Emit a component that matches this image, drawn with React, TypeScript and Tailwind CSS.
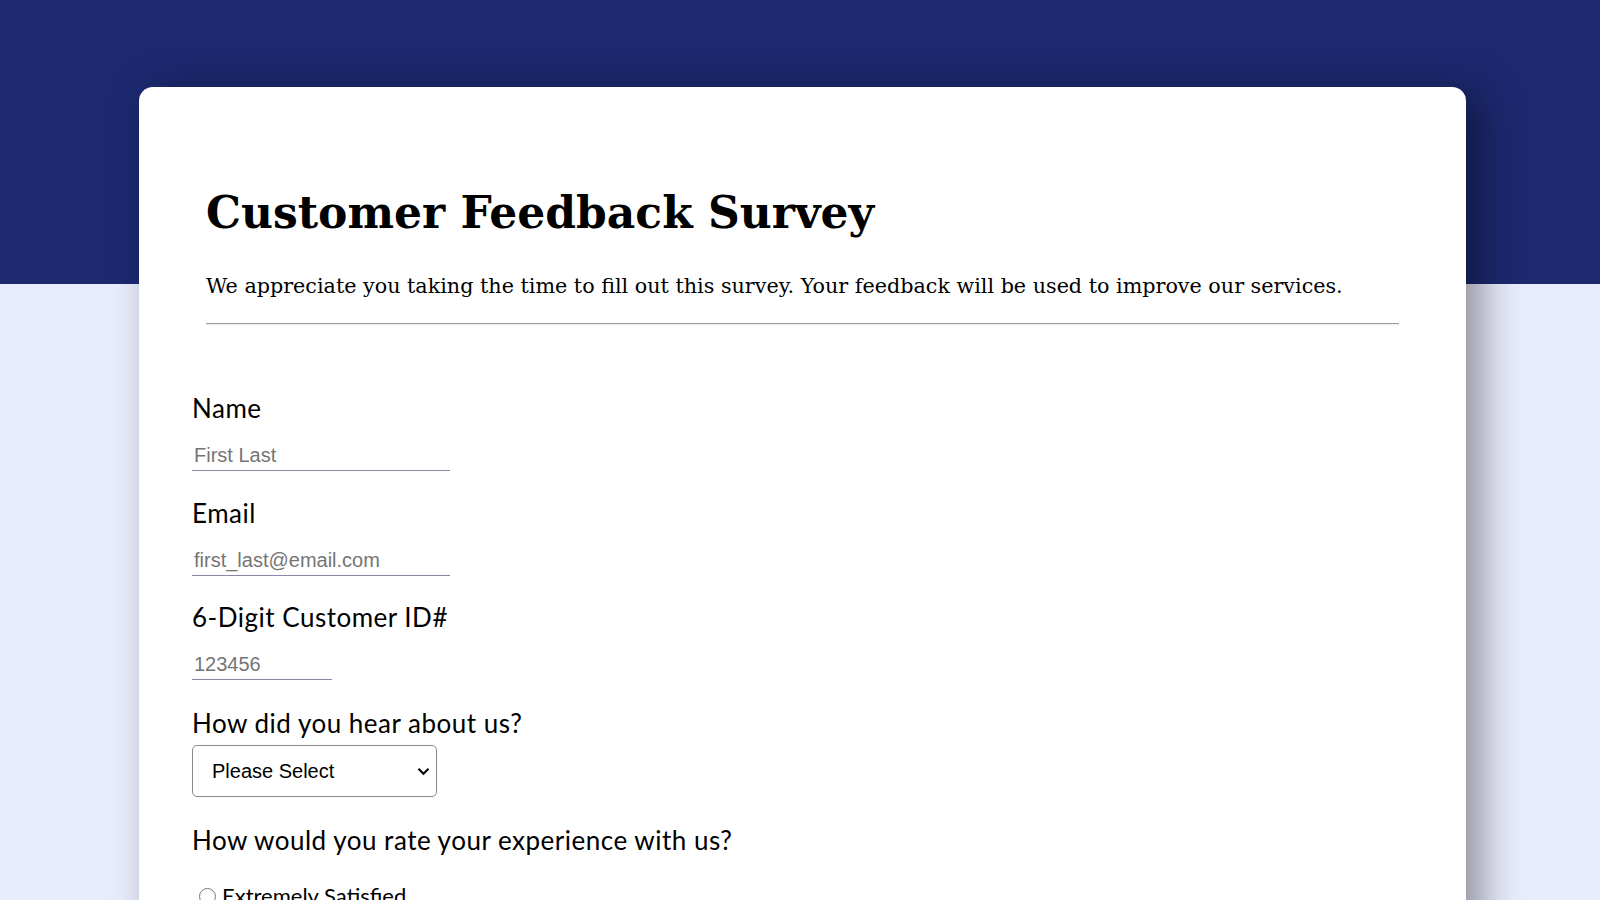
import React from "react";

const labelCls =
  "block text-[26px] leading-[30px] tracking-[0.5px] text-black font-['Lato','Open_Sans',sans-serif]";
const inputCls =
  "block border-0 border-b border-[#8589a9] bg-transparent px-[2px] pt-1 pb-[3px] text-[20px] leading-[23px] text-black outline-none font-['Liberation_Sans',Arial,sans-serif] placeholder:text-[#757575]";

const options = [
  "Extremely Satisfied",
  "Satisfied",
  "Neutral",
  "Dissatisfied",
  "Extremely Dissatisfied",
];

export default function App() {
  return (
    <div className="min-h-screen w-full bg-[linear-gradient(to_bottom,#1c296f_0px,#1c296f_284px,#e9ecfc_284px)] pt-[87px] pb-16">
      <div className="ml-[139px] w-[1327px] rounded-[14px] bg-white shadow-[15px_6px_40px_rgba(0,0,0,0.4)]">
        <header className="px-[67px] pt-[104px]">
          <h1 className="text-[44px] leading-[44px] font-bold text-black font-['DejaVu_Serif',Georgia,serif]">
            Customer Feedback Survey
          </h1>
          <p className="mt-[39px] text-[20.7px] leading-[24px] text-black font-['DejaVu_Serif',Georgia,serif]">
            We appreciate you taking the time to fill out this survey. Your feedback will be used to improve our services.
          </p>
          <hr className="mt-[25px] h-0 border-0 border-t border-b border-t-[#9b9b9b] border-b-[#eeeeee]" />
        </header>

        <form className="px-[53px] pt-[68px] pb-20">
          <div className="mb-[26.5px]">
            <label className={`${labelCls} mb-[17px]`} htmlFor="name">
              Name
            </label>
            <input id="name" type="text" placeholder="First Last" className={`${inputCls} w-[258px]`} />
          </div>

          <div className="mb-[26.5px]">
            <label className={`${labelCls} mb-[17px]`} htmlFor="email">
              Email
            </label>
            <input id="email" type="email" placeholder="first_last@email.com" className={`${inputCls} w-[258px]`} />
          </div>

          <div className="mb-[28px]">
            <label className={`${labelCls} mb-[17px]`} htmlFor="cid">
              6-Digit Customer ID#
            </label>
            <input id="cid" type="text" placeholder="123456" className={`${inputCls} w-[140px]`} />
          </div>

          <div className="mb-[28px]">
            <label className={`${labelCls} mb-[7px]`} htmlFor="hear">
              How did you hear about us?
            </label>
            <div className="relative w-[245px]">
              <select
                id="hear"
                className="block h-[52px] w-[245px] appearance-none rounded-[5px] border border-[#8a8a8a] bg-white pl-[19px] pr-8 text-[20px] text-black outline-none font-['Liberation_Sans',Arial,sans-serif]"
                defaultValue=""
              >
                <option value="">Please Select</option>
                <option>Friend</option>
                <option>Social Media</option>
                <option>Advertisement</option>
                <option>Other</option>
              </select>
              <svg
                className="pointer-events-none absolute right-[7px] top-[22px]"
                width="13"
                height="9"
                viewBox="0 0 13 9"
                fill="none"
              >
                <path d="M1.5 1.8 L6.5 6.8 L11.5 1.8" stroke="#000" strokeWidth="2" />
              </svg>
            </div>
          </div>

          <div>
            <p className={`${labelCls} mb-[28px]`}>How would you rate your experience with us?</p>
            <div className="flex flex-col gap-3">
              {options.map((o) => (
                <label key={o} className="flex items-center gap-[6px] pl-[7px] text-[22px] leading-[26px] text-black font-['Lato','Open_Sans',sans-serif]">
                  <input
                    type="radio"
                    name="rate"
                    className="h-[17px] w-[17px] appearance-none rounded-full border border-[#767676] bg-white"
                  />
                  {o}
                </label>
              ))}
            </div>
          </div>
        </form>
      </div>
    </div>
  );
}
